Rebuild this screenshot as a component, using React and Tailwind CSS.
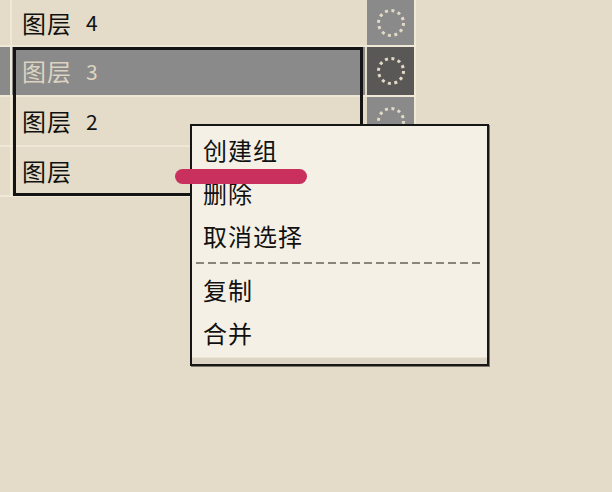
import React from "react";

const FONT = { fontFamily: '"Noto Sans CJK SC", "Noto Sans", sans-serif' };

function Ring() {
  return (
    <svg width="30" height="30" viewBox="0 0 30 30">
      <circle
        cx="15"
        cy="15"
        r="12.5"
        fill="none"
        stroke="#e2dac6"
        strokeWidth="3"
        strokeDasharray="3 3.55"
      />
    </svg>
  );
}

function Row({ num, selected, iconDark, height, last }) {
  return (
    <div className="flex" style={{ height }}>
      <div className={`w-[10px] ${selected ? "bg-[#8a8a8a]" : "bg-[#e4dcc9]"} border-b-2 border-[#f1e9d8]`} />
      <div className="w-[2px] bg-[#f1e9d8]" />
      <div
        className={`w-[353px] flex items-center pl-[10px] border-b-2 ${last ? "border-[#f1e9d8]" : "border-[#efe7d5]"} ${selected ? "bg-[#8a8a8a] text-[#dcd4c0]" : "bg-[#e4dcc9] text-[#111111]"}`}
      >
        <span className="text-[24px] leading-none tracking-[1px]">图层</span>
        {num && <span className="ml-[14px] text-[21px] leading-none">{num}</span>}
      </div>
      <div className="w-[2px] bg-[#e4dcc9] border-b-2 border-[#f1e9d8]" />
      <div className="w-[47px] flex flex-col">
        <div className={`flex-1 flex items-center justify-center ${iconDark ? "bg-[#5a5856]" : "bg-[#8a8a8a]"}`}>
          <Ring />
        </div>
        <div className="h-[2px] bg-[#f1e9d8]" />
      </div>
      <div className="w-[2px] bg-[#f1e9d8]" />
    </div>
  );
}

function MenuItem({ children }) {
  return (
    <div className="h-[43px] flex items-center pl-[11px] text-[24px] leading-none text-[#111111] tracking-[1px]">
      {children}
    </div>
  );
}

export default function App() {
  return (
    <div className="relative w-[612px] h-[492px] overflow-hidden bg-[#e4dcc9]" style={FONT}>
      <div className="flex flex-col w-[416px]">
        <Row num="4" height={47} />
        <div className="relative">
          <Row num="3" selected iconDark height={50} />
          <Row num="2" height={50} />
          <Row height={50} last />
          <div className="absolute left-[13px] top-0 w-[350px] h-[149px] border-[3px] border-[#141414] pointer-events-none" />
        </div>
      </div>

      <div className="absolute left-[190px] top-[124px] w-[299px] h-[242px] bg-[#f5f0e6] border-2 border-[#161616] shadow-[1px_1px_0_#7e796f] flex flex-col">
        <div className="pt-[2px] flex flex-col">
          <MenuItem>创建组</MenuItem>
          <MenuItem>删除</MenuItem>
          <MenuItem>取消选择</MenuItem>
          <div className="h-[11px] flex items-center px-[4px]">
            <div className="w-full h-[2px] bg-[repeating-linear-gradient(90deg,#8a8479_0_8px,transparent_8px_12px)]" />
          </div>
          <MenuItem>复制</MenuItem>
          <MenuItem>合并</MenuItem>
        </div>
        <div className="flex-1" />
        <div className="h-[7px] bg-[#dcd5c6] border-t border-[#ece5d6]" />
      </div>

      <div className="absolute left-[175px] top-[169px] w-[132px] h-[15px] rounded-full bg-[#c9305e]" />
    </div>
  );
}
